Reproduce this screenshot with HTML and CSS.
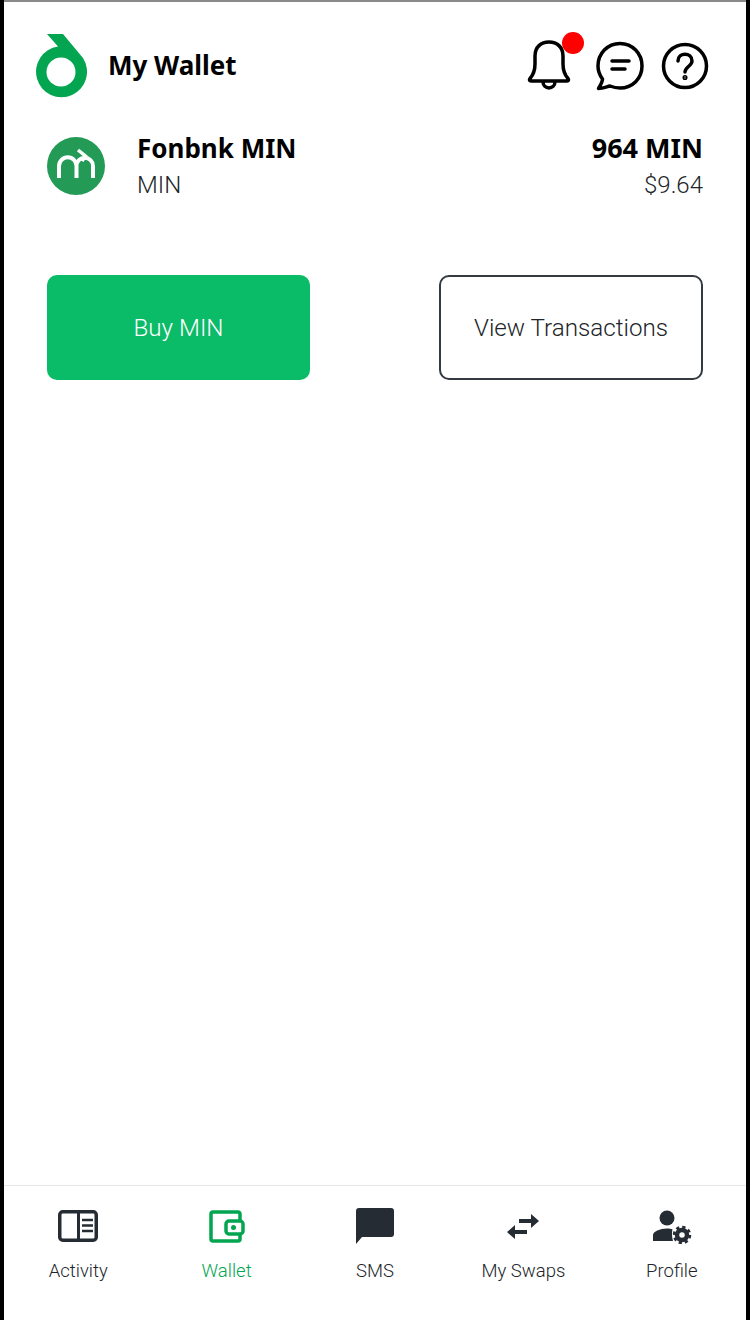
FILE: index.html
```html
<!DOCTYPE html>
<html lang="en">
<head>
    <meta charset="UTF-8">
    <meta name="viewport" content="width=device-width, initial-scale=1.0">
    <title>My Wallet</title>
    <link rel="stylesheet" href="styles.css">
</head>
<body>
    <div class="screen">
        <header class="header">
            <div class="brand">
                <svg class="logo" width="52" height="64" viewBox="0 0 52 64">
                    <path fill="#03a550" d="M11 0H27L47 24A25.500 25.500 0 1 1 22 12.500Z"/>
                    <circle cx="25" cy="38" r="14.500" fill="#fff"/>
                </svg>
                <h1 class="title">My Wallet</h1>
            </div>
            <div class="actions">
                <div class="bell">
                    <svg width="46" height="54" viewBox="0 0 46 54" fill="none" stroke="#000" stroke-width="3.500" stroke-linejoin="round">
                        <path d="M4 39.500C8 35 9 31 9 25V17C9 8 15 3 23 3S37 8 37 17V25C37 31 38 35 42 39.500C43 41 42.500 42 41 42H5C3.500 42 3 41 4 39.500Z"/>
                        <path d="M17 42.500C17 51 29 51 29 42.500"/>
                    </svg>
                    <span class="dot"></span>
                </div>
                <svg width="50" height="50" viewBox="0 0 50 50" fill="none" stroke="#000" stroke-width="3.500" stroke-linecap="round" stroke-linejoin="round">
                    <path d="M25 2.500C37.500 2.500 47 12.500 47 25S37.500 47 25 47C21 47 17.500 46 15 45C11 46 7 47.500 3.500 47.500C5.500 44 7.500 41 7.500 38C4.500 34 3 30 3 25C3 12.500 12.500 2.500 25 2.500Z"/>
                    <path d="M17 20H34M17 28H30"/>
                </svg>
                <svg width="48" height="48" viewBox="0 0 48 48" fill="none" stroke="#000" stroke-width="3.500" stroke-linecap="round">
                    <circle cx="24" cy="24" r="21.500"/>
                    <path d="M17 19C17 10 31 10 31 19C31 24 24 25 24 30"/>
                    <circle cx="24" cy="35.500" r="0.800" fill="#000"/>
                </svg>
            </div>
        </header>

        <section class="token">
            <div class="token-info">
                <svg class="token-icon" width="58" height="58" viewBox="0 0 58 58">
                    <circle cx="29" cy="29" r="29" fill="#239a55"/>
                    <path fill="none" stroke="#fff" stroke-width="4" d="M12 41V29A8.750 8.750 0 0 1 29.500 29V41M29.500 29A8.250 8.250 0 0 1 46 29V41"/>
                    <path fill="none" stroke="#fff" stroke-width="3.500" d="M31 13L38.500 19L35 24"/>
                </svg>
                <div>
                    <div class="token-name">Fonbnk MIN</div>
                    <div class="token-sub">MIN</div>
                </div>
            </div>
            <div class="token-balance">
                <div class="token-name token-amount">964 MIN</div>
                <div class="token-sub">$9.64</div>
            </div>
        </section>

        <div class="buttons">
            <button class="btn btn-green">Buy MIN</button>
            <button class="btn btn-outline">View Transactions</button>
        </div>

        <nav class="tabbar">
            <div class="tab">
                <div class="tab-icon">
                    <svg width="40" height="32" viewBox="0 0 40 32" fill="none" stroke="#262c33">
                        <rect x="1.750" y="1.750" width="36.500" height="28.500" rx="3" stroke-width="3.500"/>
                        <path stroke-width="3" d="M20.500 2V30"/>
                        <path stroke-width="2.500" d="M24 10H35M24 15.500H35M24 21H35"/>
                    </svg>
                </div>
                <span>Activity</span>
            </div>
            <div class="tab tab-active">
                <div class="tab-icon">
                    <svg width="36" height="33" viewBox="0 0 36 33" fill="none" stroke="#03a550" stroke-width="3.500">
                        <path d="M31 11V4A2 2 0 0 0 29 2H4A2 2 0 0 0 2 4V29A2 2 0 0 0 4 31H29A2 2 0 0 0 31 29V24"/>
                        <rect x="17" y="11" width="17" height="13" rx="3"/>
                        <circle cx="24.500" cy="17.500" r="2.500" fill="#03a550" stroke="none"/>
                    </svg>
                </div>
                <span>Wallet</span>
            </div>
            <div class="tab">
                <div class="tab-icon">
                    <svg width="38" height="37" viewBox="0 0 38 37">
                        <path fill="#262c33" d="M3 0H35A3 3 0 0 1 38 3V26A3 3 0 0 1 35 29H6L0 36V3A3 3 0 0 1 3 0Z"/>
                    </svg>
                </div>
                <span>SMS</span>
            </div>
            <div class="tab">
                <div class="tab-icon">
                    <svg width="34" height="27" viewBox="0 0 34 27" fill="#262c33">
                        <path d="M13 6H25V1L33 8L25 15V10H13Z"/>
                        <path d="M21 17H9V12L1 19L9 26V21H21Z"/>
                    </svg>
                </div>
                <span>My Swaps</span>
            </div>
            <div class="tab">
                <div class="tab-icon">
                    <svg width="40" height="36" viewBox="0 0 40 36" fill="#262c33">
                        <circle cx="15" cy="10" r="7.500"/>
                        <path d="M1 33V27C1 23.500 8 20.500 15 20.500C17 20.500 19 20.800 20.500 21.200C19.500 25 20 29.500 21 33Z"/>
                        <circle cx="30" cy="27" r="5" fill="none" stroke="#262c33" stroke-width="4.500"/>
                        <circle cx="30" cy="27" r="8" fill="none" stroke="#262c33" stroke-width="2.500" stroke-dasharray="3.300 2.980"/>
                    </svg>
                </div>
                <span>Profile</span>
            </div>
        </nav>
    </div>
</body>
</html>
```
FILE: styles.css
```css
* {
    box-sizing: border-box;
}
body {
    margin: 0;
    padding: 0;
    background: #000;
    font-family: Roboto, "Liberation Sans", sans-serif;
}
.screen {
    display: flex;
    flex-direction: column;
    width: 742px;
    height: 1320px;
    margin-left: 4px;
    background: #fff;
    border-top: 2px solid #8a8a8a;
}
.header {
    display: flex;
    justify-content: space-between;
    align-items: center;
    height: 64px;
    margin-top: 32px;
    padding: 0 37px 0 32px;
}
.brand {
    display: flex;
    align-items: center;
    gap: 20px;
}
.logo {
    display: block;
}
.title {
    margin: 0;
    padding-bottom: 3px;
    font-family: "Noto Sans", sans-serif;
    font-size: 26px;
    font-weight: 700;
    color: #000;
}
.actions {
    display: flex;
    align-items: center;
    gap: 16px;
}
.bell {
    position: relative;
    display: flex;
    margin-right: 7.500px;
}
.dot {
    position: absolute;
    top: -7px;
    right: -12.500px;
    width: 22px;
    height: 22px;
    background: #f00;
    border-radius: 50%;
}
.token {
    display: flex;
    justify-content: space-between;
    margin-top: 32px;
    padding: 0 43px;
}
.token-info {
    display: flex;
    gap: 32px;
}
.token-icon {
    margin-top: 7px;
}
.token-name {
    font-family: "Noto Sans", sans-serif;
    font-size: 26px;
    font-weight: 700;
    line-height: 36px;
    color: #000;
}
.token-amount {
    font-size: 27px;
}
.token-sub {
    font-size: 24px;
    font-weight: 300;
    line-height: 38px;
    color: #212529;
}
.token-balance {
    text-align: right;
}
.buttons {
    display: flex;
    justify-content: space-between;
    margin-top: 71px;
    padding: 0 43px;
}
.btn {
    width: 264px;
    height: 105px;
    padding: 0;
    font-family: Roboto, sans-serif;
    font-size: 24.200px;
    font-weight: 300;
    border-radius: 10px;
}
.btn-green {
    width: 263px;
    background: #0abb68;
    color: #fff;
    border: none;
}
.btn-outline {
    background: #fff;
    color: #212529;
    border: 2px solid #343a40;
}
.tabbar {
    display: flex;
    margin-top: auto;
    height: 135px;
    padding-top: 20px;
    border-top: 1px solid #e6e6e6;
}
.tab {
    flex: 1;
    display: flex;
    flex-direction: column;
    align-items: center;
    font-size: 18.500px;
    font-weight: 300;
    line-height: 21px;
    color: #212529;
}
.tab-icon {
    display: flex;
    align-items: center;
    justify-content: center;
    height: 40px;
    margin-bottom: 15px;
}
.tab-active {
    color: #03a550;
}
```
